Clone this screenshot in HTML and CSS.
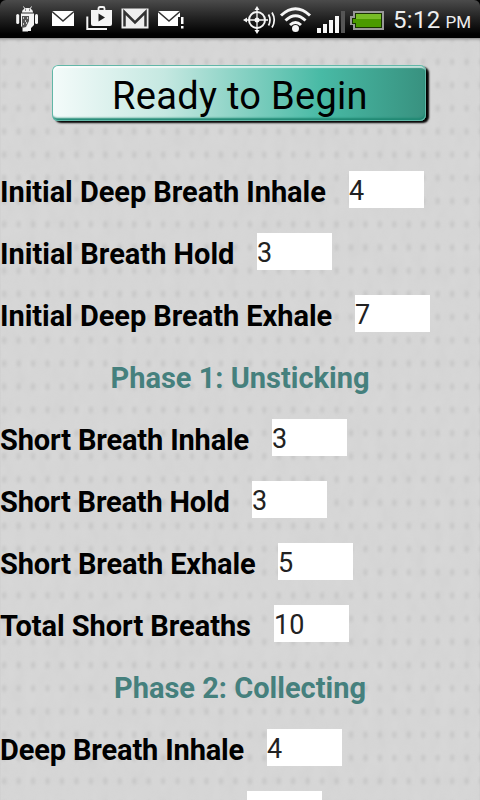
FILE: index.html
```html
<!DOCTYPE html>
<html lang="en">
<head>
    <meta charset="UTF-8">
    <title>Breathing</title>
    <meta name="viewport" content="width=device-width, initial-scale=1.0">
    <link rel="stylesheet" href="styles.css">
</head>
<body>
    <div class="statusbar">
        <!-- notifications -->
        <svg class="icons" width="190" height="38" viewBox="0 0 190 38">
            <g fill="#f4f4f4">
                <path d="M22 12.500c0-6 11-6 11 0z"/>
                <path d="M23.500 6.500l1.500 2.500M31.500 6.500l-1.500 2.500" stroke="#eee"/>
                <path d="M21 13.500h13v11.500l-3 3v3h-3v.500h-5.500v-3.500l-1.500-2z"/>
                <rect x="16.200" y="14" width="3" height="10" rx="1.500"/>
                <rect x="35" y="14" width="3" height="10" rx="1.500"/>
            </g>
            <path d="M22 16h7v5l-3 6-4 1z" fill="#555"/>
            <path d="M23 18h1m3 0h1m-3 3h1m-3 3h1m2-1h1" stroke="#eee" stroke-width="1.300"/>
            <path d="M25 10h1M29 10h1" stroke="#333"/>
            <path d="M52 11h22v15H52z" fill="#fff"/>
            <path d="M52 11.500l11 9.500 11-9.500" fill="none" stroke="#333" stroke-width="1.600"/>
            <path d="M87.300 16.500v12.500H107" fill="none" stroke="#f4f4f4" stroke-width="2"/>
            <path d="M98.500 11V8.500q0-1.500 1.500-1.500h3q1.500 0 1.500 1.500V11" fill="none" stroke="#f4f4f4" stroke-width="1.800"/>
            <path d="M91 10h21v14q0 2-2 2H93q-2 0-2-2z" fill="#f4f4f4"/>
            <path d="M98.500 13.500v8l6.500-4z" fill="#222"/>
            <path d="M121.500 8.500h27v20h-27z" fill="#eee"/>
            <path d="M124.500 26.500V12l10.500 10.500L145.500 12v14.500" fill="none" stroke="#333" stroke-width="2.500"/>
            <path d="M158 11h22v6h-2v9h-20z" fill="#fff"/>
            <path d="M158 11.500l11 9.500 11-9.500" fill="none" stroke="#333" stroke-width="1.600"/>
            <path d="M181 17h2.500v7H181zm0 9h2.500v2.500H181z" fill="#fff"/>
        </svg>
        <!-- gps, wifi, signal, battery -->
        <svg class="icons" width="144" height="38" viewBox="242 0 144 38">
            <g fill="none" stroke="#f6f6f6">
                <circle cx="257" cy="20" r="8" stroke-width="2"/>
                <path d="M257 9v22M246 20h22" stroke-width="1.300"/>
                <path d="M268.500 14.500q3 5.500 0 11M272 12.500q4.500 7.500 0 15" stroke-width="1.700"/>
                <path d="M281 15.500q14.500-13.500 29 0M285.500 20.500q10-9.500 20 0M290 25q5.500-5 11 0" stroke-width="3"/>
            </g>
            <g fill="#f6f6f6">
                <path d="M257 6l2.500 4h-5zM257 34l2.500-4h-5zM243 20l4-2.500v5z"/>
                <circle cx="257" cy="20" r="2.500"/>
                <circle cx="295.500" cy="28.500" r="3.500"/>
                <path d="M317 28h4v5h-4zM323 24h4v9h-4zM329 20h4v13h-4zM335 16h4v17h-4z"/>
            </g>
            <path d="M341 11h4v22h-4z" fill="#555"/>
            <path d="M353 11h31v19h-31v-5h-3v-9h3z" fill="#999"/>
            <path d="M355 13h27v15h-27v-4h-3v-6h3z" fill="#183300"/>
            <path d="M356 14h25v13h-25v-4h-3v-4h3z" fill="#4b9a00"/>
            <path d="M356 14h25v5h-25z" fill="#78bd27"/>
        </svg>
        <div class="clock">5:12<span>PM</span></div>
    </div>

    <!-- woven background -->
    <div class="page">
        <svg class="texture" width="480" height="762">
            <filter id="grain" x="0" y="0" width="100%" height="100%">
                <feTurbulence type="fractalNoise" baseFrequency=".08 .045" numOctaves="2" seed="4"/>
                <feColorMatrix values="0 0 0 0 .5  0 0 0 0 .5  0 0 0 0 .5  .5 0 0 0 -.14"/>
            </filter>
            <filter id="soft" x="-50%" y="-50%" width="200%" height="200%"><feGaussianBlur stdDeviation="1.500"/></filter>
            <pattern id="weave" x="-3" y="-11" width="14.450" height="23.200" patternUnits="userSpaceOnUse">
                <ellipse cx="7.200" cy="11.600" rx="2" ry="3.500" fill="#a4a4a4" filter="url(#soft)"/>
            </pattern>
            <rect width="480" height="762" fill="url(#weave)" opacity=".32"/>
            <rect width="480" height="762" filter="url(#grain)" opacity=".4"/>
        </svg>
        <div class="content">
            <button class="begin">Ready to Begin</button>
            <div class="row"><label class="w326">Initial Deep Breath Inhale</label><input value="4"></div>
            <div class="row"><label class="w234">Initial Breath Hold</label><input value="3"></div>
            <div class="row"><label class="w332">Initial Deep Breath Exhale</label><input value="7"></div>
            <h2>Phase 1: Unsticking</h2>
            <div class="row"><label class="w249">Short Breath Inhale</label><input value="3"></div>
            <div class="row"><label class="w229">Short Breath Hold</label><input value="3"></div>
            <div class="row"><label class="w255">Short Breath Exhale</label><input value="5"></div>
            <div class="row"><label class="w251">Total Short Breaths</label><input value="10"></div>
            <h2>Phase 2: Collecting</h2>
            <div class="row"><label class="w244">Deep Breath Inhale</label><input value="4"></div>
            <div class="row"><label class="w224"></label><input></div>
        </div>
    </div>
</body>
</html>
```

FILE: styles.css
```css
* { box-sizing: border-box; }
body { margin: 0; height: 800px; overflow: hidden; background: #000; font-family: Roboto, "Liberation Sans", sans-serif; }
.statusbar { height: 38px; display: flex; align-items: flex-start; background: linear-gradient(#4b4b4b, #202020 50%, #000 90%); border-radius: 6px 6px 0 0; }
.icons { flex: none; }
.icons + .icons { margin-left: 52px; }
.clock { margin-left: 7px; line-height: 40px; font-size: 24px; letter-spacing: .3px; color: #eee; white-space: nowrap; }
.clock span { font-size: 17px; letter-spacing: 0; margin-left: 5px; }
.page { position: relative; height: 762px; overflow: hidden; background: #d7d7d7; box-shadow: inset 0 3px 3px -2px #777; }
.texture { position: absolute; top: 0; left: 0; }
.content { position: relative; padding-top: 27px; }
.begin { display: block; width: 374px; height: 56px; margin: 0 0 37px 52px; padding: 3px 0 0 2px; border: 0; border-radius: 6px; font: 38px/56px Roboto, "Liberation Sans", sans-serif; letter-spacing: .3px; color: #000; background: linear-gradient(90deg, #f4fbfa, #c5e8e1 30%, #48baa5 72%, #38917f); box-shadow: inset 0 0 0 1px #61b7a7, inset 1px 3px 1px rgba(255,255,255,.7), inset -1px -3px 2px #208873, 3px 2px 2px #000; }
.row { height: 62px; display: flex; align-items: center; }
.row label { flex: none; margin-right: 23px; padding-top: 5px; font-size: 29px; font-weight: bold; letter-spacing: -.05px; color: #000; white-space: nowrap; }
.row input { width: 75px; height: 37px; padding: 4px 0 0; margin: 0; border: 0; background: #fff; color: #222; font: 27px Roboto, "Liberation Sans", sans-serif; }
h2 { height: 62px; margin: 0; padding-top: 5px; line-height: 58px; text-align: center; font-size: 29px; color: #45807d; }
.row .w326 { width: 326px; }
.row .w234 { width: 234px; letter-spacing: 0; }
.row .w332 { width: 332px; }
.row .w249 { width: 249px; letter-spacing: -.15px; }
.row .w229 { width: 229px; letter-spacing: -.2px; }
.row .w255 { width: 255px; letter-spacing: -.15px; }
.row .w251 { width: 251px; }
.row .w244 { width: 244px; letter-spacing: -.15px; }
.row .w224 { width: 224px; }
```
